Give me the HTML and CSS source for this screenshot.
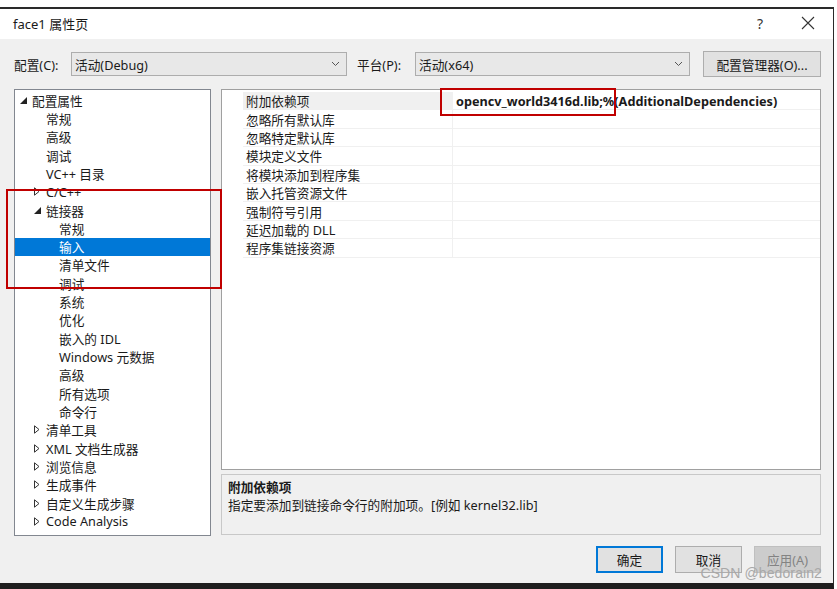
FILE: index.html
```html
<!DOCTYPE html>
<html lang="zh">
<head>
<meta charset="utf-8">
<title>face1 属性页</title>
<link rel="stylesheet" href="styles.css">
</head>
<body>
<div class="window">
  <div class="titlebar">
    <span class="title">face1 属性页</span>
    <span class="help">?</span>
    <span class="close"><svg width="14" height="14" viewBox="0 0 14 14"><path d="M1 1L13 13M13 1L1 13" stroke="#333" stroke-width="1.1" fill="none"/></svg></span>
  </div>
  <div class="body">
    <div class="config-row">
      <span class="lbl">配置(C):</span>
      <div class="combo combo-config"><span>活动(Debug)</span><svg class="chev" width="9" height="6" viewBox="0 0 9 6"><path d="M1 1L4.5 4.5L8 1" stroke="#555" fill="none"/></svg></div>
      <span class="lbl lbl-plat">平台(P):</span>
      <div class="combo combo-plat"><span>活动(x64)</span><svg class="chev" width="9" height="6" viewBox="0 0 9 6"><path d="M1 1L4.5 4.5L8 1" stroke="#555" fill="none"/></svg></div>
      <button class="btn btn-mgr">配置管理器(O)...</button>
    </div>
    <div class="main">
      <div class="tree">
        <div class="node l0"><span class="tg"><svg width="7" height="7" viewBox="0 0 7 7"><path d="M7 0V7H0Z" fill="#222"/></svg></span><span>配置属性</span></div>
        <div class="node l1"><span class="tg"></span><span>常规</span></div>
        <div class="node l1"><span class="tg"></span><span>高级</span></div>
        <div class="node l1"><span class="tg"></span><span>调试</span></div>
        <div class="node l1"><span class="tg"></span><span>VC++ 目录</span></div>
        <div class="node l1"><span class="tg"><svg width="6" height="9" viewBox="0 0 6 9"><path d="M0.5 0.8L5 4.5L0.5 8.2Z" stroke="#333" fill="none"/></svg></span><span>C/C++</span></div>
        <div class="node l1"><span class="tg"><svg width="7" height="7" viewBox="0 0 7 7"><path d="M7 0V7H0Z" fill="#222"/></svg></span><span>链接器</span></div>
        <div class="node l2"><span class="tg"></span><span>常规</span></div>
        <div class="node l2 sel"><span class="tg"></span><span>输入</span></div>
        <div class="node l2"><span class="tg"></span><span>清单文件</span></div>
        <div class="node l2"><span class="tg"></span><span>调试</span></div>
        <div class="node l2"><span class="tg"></span><span>系统</span></div>
        <div class="node l2"><span class="tg"></span><span>优化</span></div>
        <div class="node l2"><span class="tg"></span><span>嵌入的 IDL</span></div>
        <div class="node l2"><span class="tg"></span><span>Windows 元数据</span></div>
        <div class="node l2"><span class="tg"></span><span>高级</span></div>
        <div class="node l2"><span class="tg"></span><span>所有选项</span></div>
        <div class="node l2"><span class="tg"></span><span>命令行</span></div>
        <div class="node l1"><span class="tg"><svg width="6" height="9" viewBox="0 0 6 9"><path d="M0.5 0.8L5 4.5L0.5 8.2Z" stroke="#333" fill="none"/></svg></span><span>清单工具</span></div>
        <div class="node l1"><span class="tg"><svg width="6" height="9" viewBox="0 0 6 9"><path d="M0.5 0.8L5 4.5L0.5 8.2Z" stroke="#333" fill="none"/></svg></span><span>XML 文档生成器</span></div>
        <div class="node l1"><span class="tg"><svg width="6" height="9" viewBox="0 0 6 9"><path d="M0.5 0.8L5 4.5L0.5 8.2Z" stroke="#333" fill="none"/></svg></span><span>浏览信息</span></div>
        <div class="node l1"><span class="tg"><svg width="6" height="9" viewBox="0 0 6 9"><path d="M0.5 0.8L5 4.5L0.5 8.2Z" stroke="#333" fill="none"/></svg></span><span>生成事件</span></div>
        <div class="node l1"><span class="tg"><svg width="6" height="9" viewBox="0 0 6 9"><path d="M0.5 0.8L5 4.5L0.5 8.2Z" stroke="#333" fill="none"/></svg></span><span>自定义生成步骤</span></div>
        <div class="node l1"><span class="tg"><svg width="6" height="9" viewBox="0 0 6 9"><path d="M0.5 0.8L5 4.5L0.5 8.2Z" stroke="#333" fill="none"/></svg></span><span>Code Analysis</span></div>
      </div>
      <div class="right">
        <div class="grid">
          <div class="row cur"><span class="gut"></span><span class="name">附加依赖项</span><span class="val bold">opencv_world3416d.lib;%(AdditionalDependencies)</span></div>
          <div class="row"><span class="gut"></span><span class="name">忽略所有默认库</span><span class="val"></span></div>
          <div class="row"><span class="gut"></span><span class="name">忽略特定默认库</span><span class="val"></span></div>
          <div class="row"><span class="gut"></span><span class="name">模块定义文件</span><span class="val"></span></div>
          <div class="row"><span class="gut"></span><span class="name">将模块添加到程序集</span><span class="val"></span></div>
          <div class="row"><span class="gut"></span><span class="name">嵌入托管资源文件</span><span class="val"></span></div>
          <div class="row"><span class="gut"></span><span class="name">强制符号引用</span><span class="val"></span></div>
          <div class="row"><span class="gut"></span><span class="name">延迟加载的 DLL</span><span class="val"></span></div>
          <div class="row"><span class="gut"></span><span class="name">程序集链接资源</span><span class="val"></span></div>
        </div>
        <div class="desc">
          <div class="desc-title">附加依赖项</div>
          <div class="desc-text">指定要添加到链接命令行的附加项。[例如 kernel32.lib]</div>
        </div>
      </div>
    </div>
    <div class="buttons">
      <button class="btn btn-ok">确定</button>
      <button class="btn">取消</button>
      <button class="btn btn-dis">应用(A)</button>
    </div>
  </div>
  <div class="mark mark-value"></div>
  <div class="mark mark-tree"></div>
  <div class="watermark">CSDN @bedorain2</div>
</div>
</body>
</html>
```
FILE: styles.css
```css
* { box-sizing: border-box; }
html, body { margin: 0; padding: 0; background: #ffffff; }
body {
  font-family: "Noto Sans", "Noto Sans CJK SC", sans-serif;
  font-size: 12.7px;
  color: #1a1a1a;
  width: 837px;
  height: 589px;
  overflow: hidden;
}
.window {
  position: relative;
  margin-top: 7px;
  width: 834px;
  height: 582px;
  border-top: 2px solid #2a2a2a;
  border-right: 1px solid #2a2a2a;
  border-bottom: 6px solid #1e1e1e;
  display: flex;
  flex-direction: column;
}
.titlebar {
  height: 30px;
  flex: none;
  background: #fff;
  display: flex;
  align-items: center;
  padding-left: 13px;
  padding-bottom: 2px;
  font-size: 13px;
}
.title { flex: 1; }
.help { width: 48px; text-align: center; font-size: 14px; color: #333; }
.close { width: 48px; display: flex; justify-content: center; align-items: center; margin-right: 1px; }
.body {
  flex: 1;
  background: #f0f0f0;
  padding: 12px 12px 10px 14px;
  display: flex;
  flex-direction: column;
}
.config-row {
  height: 26px;
  display: flex;
  align-items: center;
}
.lbl { width: 57px; }
.lbl-plat { width: 58px; margin-left: 10px; }
.combo {
  height: 24px;
  background: #e8e8e8;
  border: 1px solid #adadad;
  display: flex;
  align-items: center;
  padding: 0 6px 0 3px;
}
.combo span { flex: 1; }
.combo-config { width: 276px; }
.combo-plat { width: 275px; }
.btn {
  font-family: inherit;
  font-size: 12.7px;
  color: #1a1a1a;
  background: #e1e1e1;
  border: 1px solid #adadad;
  padding: 0;
  height: 27px;
  width: 67px;
}
.btn-mgr { width: 118px; height: 26px; margin-left: 13px; }
.main {
  margin-top: 12px;
  flex: 1;
  display: flex;
  gap: 10px;
}
.tree {
  width: 197px;
  background: #fff;
  border: 1px solid #828790;
  padding-top: 1px;
}
.node {
  height: 18.32px;
  display: flex;
  align-items: center;
  white-space: nowrap;
}
.node.l0 { padding-left: 5px; }
.node.l1 { padding-left: 19px; }
.node.l2 { padding-left: 32px; }
.tg { width: 12px; flex: none; display: flex; align-items: center; }
.node.sel { background: #0078d7; color: #fff; }
.right {
  flex: 1;
  display: flex;
  flex-direction: column;
  gap: 4px;
}
.grid {
  height: 381px;
  background: #fff;
  border: 1px solid #a0a0a0;
  padding-top: 2px;
}
.row {
  height: 18.4px;
  display: flex;
  align-items: center;
}
.gut { width: 21px; height: 100%; flex: none; }
.name {
  width: 210px;
  height: 100%;
  flex: none;
  padding-left: 3px;
  display: flex;
  align-items: center;
  border-bottom: 1px solid #f0f0f0;
  border-right: 1px solid #f0f0f0;
}
.row.cur .name { background: #f0f0f0; }
.val {
  flex: 1;
  height: 100%;
  padding-left: 3px;
  display: flex;
  align-items: center;
  border-bottom: 1px solid #f0f0f0;
  white-space: nowrap;
}
.bold { font-weight: 700; }
.desc {
  height: 61px;
  border: 1px solid #c8c8c8;
  padding: 3px 6px;
}
.desc-title { font-weight: 700; height: 18px; line-height: 18px; }
.desc-text { height: 18px; line-height: 18px; }
.buttons {
  margin-top: 10px;
  display: flex;
  justify-content: flex-end;
  gap: 12px;
}
.btn-ok { border: 2px solid #0078d7; }
.btn-dis { background: #cccccc; border-color: #bfbfbf; color: #838383; }
.mark {
  position: absolute;
  border: 2px solid #c00000;
}
.mark-value { left: 440px; top: 79px; width: 176px; height: 28px; }
.mark-tree { left: 6px; top: 180px; width: 216px; height: 100px; }
.watermark {
  position: absolute;
  right: 11px;
  top: 556px;
  font-family: "Liberation Sans", sans-serif;
  font-size: 14px;
  color: #a8a8a8;
  letter-spacing: 0.1px;
}
```
